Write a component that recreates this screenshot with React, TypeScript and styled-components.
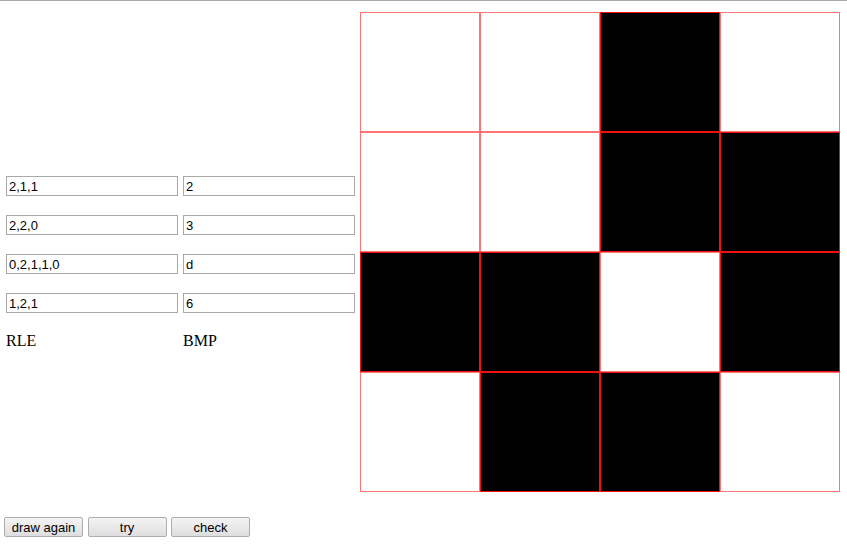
import React from 'react';
import styled, { createGlobalStyle } from 'styled-components';

const GlobalStyle = createGlobalStyle`
  body {
    margin: 0;
    font-family: "Liberation Serif", "Times New Roman", serif;
    font-size: 16px;
    background: #fff;
    color: #000;
  }
`;

const Page = styled.div`
  border-top: 1px solid #a9a9a9;
  width: 847px;
`;

const Main = styled.div`
  display: flex;
  padding-top: 11px;
`;

const LeftPanel = styled.div`
  width: 360px;
  padding-top: 164px;
  box-sizing: border-box;
`;

const Fields = styled.div`
  display: grid;
  grid-template-columns: 172px 172px;
  column-gap: 5px;
  row-gap: 19px;
  margin-left: 6px;
`;

const Field = styled.input`
  box-sizing: border-box;
  width: 172px;
  height: 20px;
  margin: 0;
  padding: 1px 2px;
  border: 1px solid #a9a9a9;
  font-family: "Liberation Sans", Arial, sans-serif;
  font-size: 13px;
  color: #000;
  outline: none;
`;

const Labels = styled.div`
  display: grid;
  grid-template-columns: 172px 172px;
  column-gap: 5px;
  margin: 19px 0 0 6px;
  line-height: 18px;
`;

const Board = styled.div`
  display: grid;
  grid-template-columns: repeat(4, 120px);
  grid-template-rows: repeat(4, 120px);
`;

const Cell = styled.div<{ $on: boolean }>`
  box-sizing: border-box;
  background: ${(p) => (p.$on ? '#000' : '#fff')};
  border: 1px solid ${(p) => (p.$on ? '#f01010' : '#ff7474')};
`;

const Actions = styled.div`
  display: flex;
  gap: 4.5px;
  margin: 25px 0 0 4px;
`;

const Button = styled.button`
  width: 79px;
  height: 20px;
  padding: 0;
  border: 1px solid #adadad;
  border-radius: 2px;
  background: linear-gradient(#f4f4f4, #dedede);
  font-family: "Liberation Sans", Arial, sans-serif;
  font-size: 13px;
  color: #000;
  cursor: pointer;
`;

const rows = [
  ['2,1,1', '2'],
  ['2,2,0', '3'],
  ['0,2,1,1,0', 'd'],
  ['1,2,1', '6'],
];

const pattern = [
  [0, 0, 1, 0],
  [0, 0, 1, 1],
  [1, 1, 0, 1],
  [0, 1, 1, 0],
];

const App: React.FC = () => {
  return (
    <Page>
      <GlobalStyle />
      <Main>
        <LeftPanel>
          <Fields>
            {rows.map(([rle, bmp], i) => (
              <React.Fragment key={i}>
                <Field defaultValue={rle} />
                <Field defaultValue={bmp} />
              </React.Fragment>
            ))}
          </Fields>
          <Labels>
            <span>RLE</span>
            <span>BMP</span>
          </Labels>
        </LeftPanel>
        <Board>
          {pattern.flatMap((row, r) =>
            row.map((v, c) => <Cell key={`${r}-${c}`} $on={v === 1} />)
          )}
        </Board>
      </Main>
      <Actions>
        <Button>draw again</Button>
        <Button>try</Button>
        <Button>check</Button>
      </Actions>
    </Page>
  );
};

export default App;
